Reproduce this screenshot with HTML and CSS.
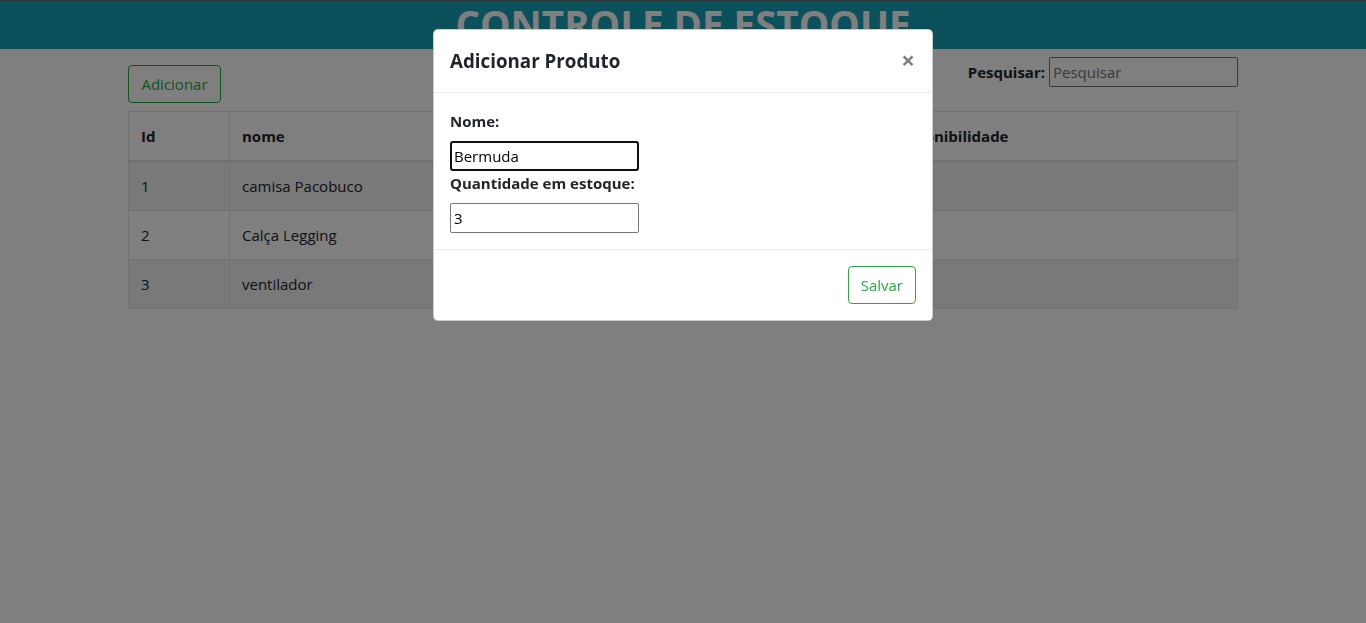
FILE: index.html
```html
<!DOCTYPE html>
<html lang="pt-BR">
<head>
<meta charset="utf-8">
<title>Controle de Estoque</title>
<link rel="stylesheet" href="styles.css">
</head>
<body>
<header class="topbar">
  <h1 class="topbar-title">CONTROLE DE ESTOQUE</h1>
</header>
<main class="container">
  <div class="toolbar">
    <button class="btn btn-outline-success btn-add">Adicionar</button>
    <div class="search">
      <label class="search-label" for="pesquisa">Pesquisar:</label>
      <input class="field field-search" id="pesquisa" type="text" placeholder="Pesquisar">
    </div>
  </div>
  <table class="table">
    <colgroup>
      <col class="col-id"><col class="col-nome"><col class="col-qtd"><col>
    </colgroup>
    <thead>
      <tr><th>Id</th><th>nome</th><th>Quantidade</th><th>Disponibilidade</th></tr>
    </thead>
    <tbody>
      <tr class="odd"><td>1</td><td>camisa Pacobuco</td><td></td><td></td></tr>
      <tr><td>2</td><td>Calça Legging</td><td></td><td></td></tr>
      <tr class="odd"><td>3</td><td>ventilador</td><td></td><td></td></tr>
    </tbody>
  </table>
</main>

<div class="backdrop"></div>
<div class="modal">
  <div class="modal-content">
    <div class="modal-header">
      <h5 class="modal-title">Adicionar Produto</h5>
      <button class="close" aria-label="Fechar">×</button>
    </div>
    <div class="modal-body">
      <label class="form-label" for="nome">Nome:</label>
      <input class="field field-focused" id="nome" type="text" value="Bermuda">
      <label class="form-label" for="qtd">Quantidade em estoque:</label>
      <input class="field" id="qtd" type="text" value="3">
    </div>
    <div class="modal-footer">
      <button class="btn btn-outline-success">Salvar</button>
    </div>
  </div>
</div>
</body>
</html>
```
FILE: styles.css
```css
* { box-sizing: border-box; }
html, body { margin: 0; padding: 0; }
body {
  font-family: "Open Sans", "Noto Sans", sans-serif;
  font-size: 15px;
  line-height: 24px;
  color: #212529;
  background: #fff;
}

.topbar {
  height: 49px;
  border-top: 1px solid #666;
  background: #17a2b8;
}
.topbar-title {
  margin: 0;
  text-align: center;
  color: #fff;
  font-size: 38.5px;
  line-height: 46px;
  font-weight: 700;
}

.container {
  width: 1110px;
  margin: 0 auto;
}
.toolbar {
  display: flex;
  justify-content: space-between;
  align-items: flex-start;
}
.btn {
  font-family: inherit;
  font-size: 15px;
  line-height: 24px;
  padding: 6px 12px;
  border-radius: 4px;
  background: transparent;
  cursor: pointer;
}
.btn-outline-success {
  color: #28a745;
  border: 1px solid #28a745;
}
.btn-add { margin-top: 16px; width: 93px; }

.search {
  margin-top: 8px;
  display: flex;
  align-items: center;
  gap: 4px;
}
.search-label { font-weight: 700; }

.field {
  font-family: inherit;
  font-size: 15px;
  width: 189px;
  height: 30px;
  padding: 1px 3px;
  border: 1px solid #767676;
  border-radius: 2px;
  color: #000;
  background: #fff;
  outline: none;
}
.field::placeholder { color: #757575; }
.field-focused {
  border: 2px solid #101010;
  border-radius: 3px;
  padding: 0 2px;
}

.table {
  width: 100%;
  margin-top: 8px;
  border-collapse: collapse;
  table-layout: fixed;
}
.col-id { width: 101px; }
.col-nome { width: 321px; }
.col-qtd { width: 329px; }
.table th, .table td {
  border: 1px solid #dee2e6;
  padding: 12px;
  height: 49px;
  text-align: left;
  vertical-align: top;
}
.table th { font-weight: 700; }
.table thead th { border-bottom-width: 2px; }
.table tr.odd td { background: rgba(0,0,0,.05); }

.backdrop {
  position: fixed;
  inset: 0;
  background: rgba(0,0,0,.5);
}
.modal {
  position: fixed;
  inset: 0;
  display: flex;
  justify-content: center;
  align-items: flex-start;
  padding-top: 29px;
}
.modal-content {
  width: 500px;
  background: #fff;
  border: 1px solid rgba(0,0,0,.2);
  border-radius: 5px;
}
.modal-header {
  display: flex;
  align-items: flex-start;
  justify-content: space-between;
  padding: 16px;
  border-bottom: 1px solid #e9ecef;
}
.modal-title {
  margin: 0;
  font-size: 18.75px;
  line-height: 30px;
  font-weight: 700;
}
.close {
  border: 0;
  background: transparent;
  padding: 0;
  margin: 2px 1px 0 0;
  font-family: inherit;
  font-size: 24px;
  line-height: 24px;
  font-weight: 700;
  color: #000;
  opacity: .5;
  cursor: pointer;
}
.modal-body {
  padding: 16px;
}
.form-label {
  display: block;
  font-weight: 700;
  margin-bottom: 8px;
}
.modal-footer {
  display: flex;
  justify-content: flex-end;
  padding: 12px;
  border-top: 1px solid #e9ecef;
}
.modal-footer .btn { margin: 4px; }
```
